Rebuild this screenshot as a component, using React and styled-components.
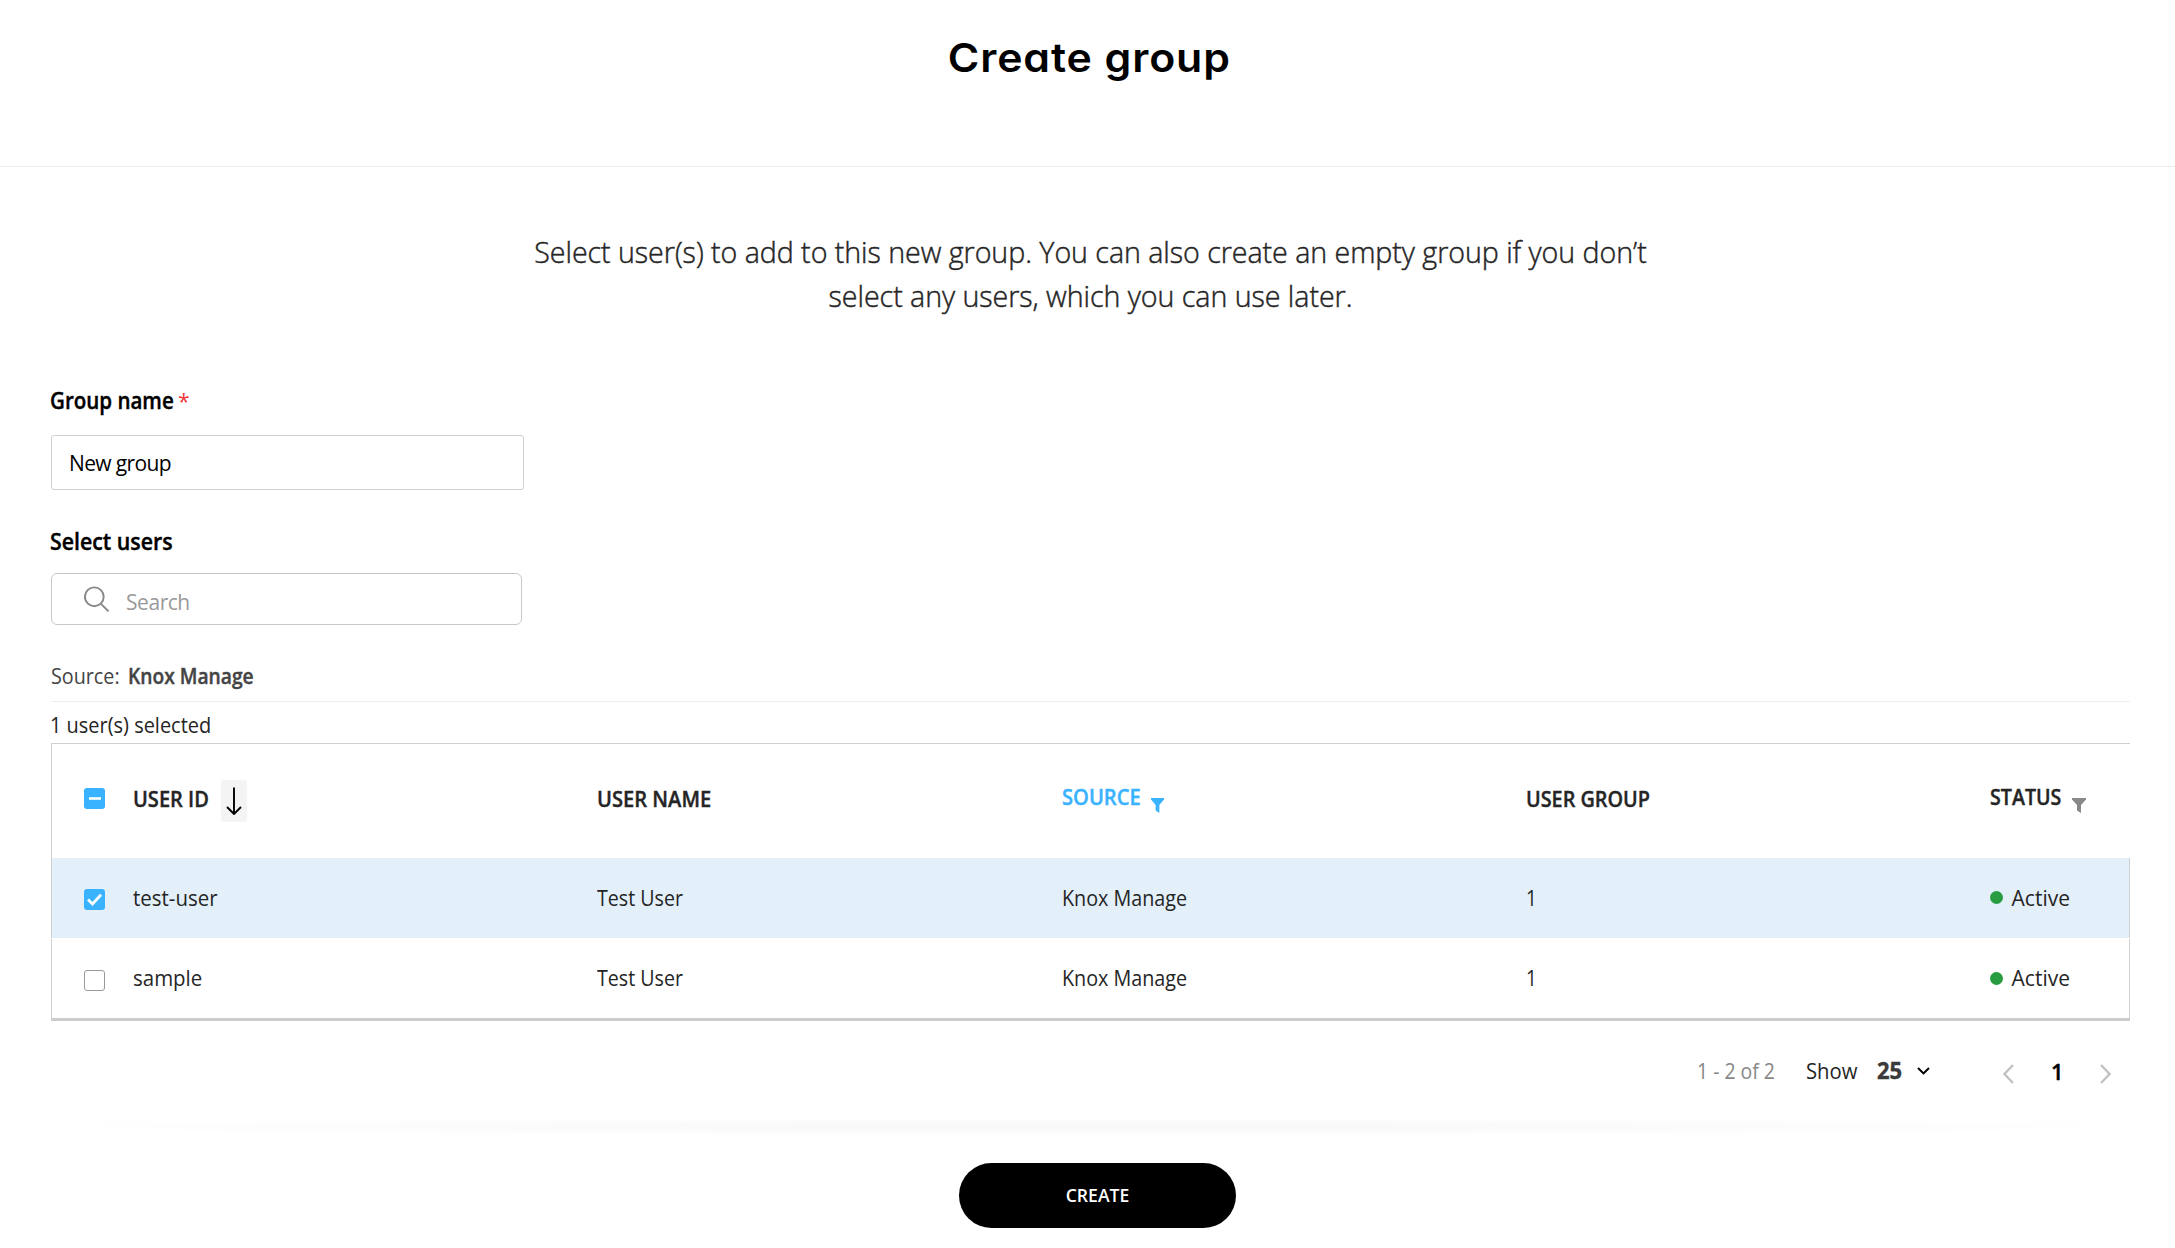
import React from "react";
import styled, { createGlobalStyle, css } from "styled-components";

const GlobalStyle = createGlobalStyle`
  *, *::before, *::after { box-sizing: border-box; }
  body { margin: 0; background: #fff; color: #252525; font-family: "Open Sans", "Noto Sans", sans-serif; }
`;

const type = css`
  font-family: "Open Sans", "Noto Sans", sans-serif;
  font-size: ${(p) => p.$size || 21}px;
  font-weight: ${(p) => p.$weight || 400};
  line-height: 30px;
  white-space: nowrap;
`;

const Page = styled.div`
  min-height: 1248px;
`;
const Header = styled.header`
  height: 167px;
  padding: 28px 47px 0 51px;
  border-bottom: 1px solid #ebebeb;
  display: flex;
  justify-content: center;
  align-items: flex-start;
`;
const Title = styled.h1`
  margin: 0;
  color: #000;
  font: 600 40px/60px Inter, sans-serif;
  font-feature-settings: "cv11";
  letter-spacing: 0.85px;
  transform: scaleX(1.07);
`;
const Main = styled.main`
  padding: 63px 45px 0 51px;
  display: flex;
  flex-direction: column;
  align-items: flex-start;
`;
const Intro = styled.p`
  ${type}
  align-self: center;
  margin: 0;
  line-height: 44px;
  text-align: center;
  letter-spacing: -0.04px;
  -webkit-text-stroke: 0.45px currentColor;
`;
const Label = styled.label`
  display: flex;
  gap: 3px;
  height: 30px;
  margin-top: ${(p) => p.$top}px;
  margin-left: -1px;
  color: #000;
`;
/* $fit condenses the glyphs, $w is the width the text takes up in its row */
const Text = styled.span`
  ${type}
  display: block;
  width: ${(p) => (p.$w ? `${p.$w}px` : "auto")};
  color: ${(p) => p.$color || "inherit"};
  -webkit-text-stroke: ${(p) => (p.$weight ? "0.4px currentColor" : "0")};
  transform: ${(p) => (p.$fit ? `scaleX(${p.$fit})` : "none")};
  transform-origin: 0 50%;
`;
const GroupInput = styled.input`
  ${type}
  width: 473px;
  height: 55px;
  margin-top: 19px;
  padding: 0 17px;
  border: 1px solid #d0d0d0;
  border-radius: 3px;
  color: #000;
  background: #fff;
  letter-spacing: -0.65px;
`;
const SearchBox = styled.div`
  width: 471px;
  height: 52px;
  margin-top: 16px;
  padding-left: 32px;
  border: 1px solid #c8c8c8;
  border-radius: 6px;
  display: flex;
  align-items: center;
`;
const SearchInput = styled.input`
  ${type}
  flex: 1;
  min-width: 0;
  margin: 5px 16px 0 17px;
  padding: 0;
  border: 0;
  background: transparent;
  letter-spacing: -0.45px;
  &::placeholder { color: #999; opacity: 1; }
`;
const SourceLine = styled.div`
  align-self: stretch;
  display: flex;
  gap: 9px;
  margin-top: 36px;
  padding-bottom: 10px;
  border-bottom: 1px solid #eee;
  color: #444;
`;
const Selected = styled.div`
  margin: 8px 0 0 -1px;
`;
const Table = styled.div`
  align-self: stretch;
  margin-top: 3px;
  border-bottom: 3px solid #ccc;
  display: grid;
  row-gap: 1px;
`;
const rowGrid = css`
  display: grid;
  grid-template-columns: 48.8px 464.4px 464.4px 464.4px 463.6px 1fr;
  align-items: center;
  padding-left: 32px;
  border-left: 1px solid #d0d0d0;
`;
const HeadRow = styled.div`
  ${rowGrid}
  height: 115px;
  margin-bottom: -1px;
  padding-bottom: 5px;
  border-top: 1px solid #d0d0d0;
`;
const Row = styled.div`
  ${rowGrid}
  height: ${(p) => (p.$selected ? 80 : 79)}px;
  padding-bottom: 1px;
  border-right: 1px solid #d0d0d0;
  background: ${(p) => (p.$selected ? "#e3f0f9" : "#fff")};
`;
const Cell = styled.div`
  display: flex;
  align-items: center;
  gap: ${(p) => p.$gap || 0}px;
  margin-top: ${(p) => p.$shift || 0}px;
`;
const Check = styled.span`
  width: 21px;
  height: 21px;
  margin-top: ${(p) => p.$drop || 0}px;
  border-radius: 3px;
  display: flex;
  background: ${(p) => (p.$on ? "#39b2ff" : "#fff")};
  border: ${(p) => (p.$on ? "0" : "1px solid #999")};
`;
const SortButton = styled.span`
  width: 26px;
  height: 42px;
  margin-top: 6px;
  border-radius: 3px;
  background: #f4f4f4;
  display: flex;
  align-items: center;
  justify-content: center;
`;
const FunnelSlot = styled.span`
  display: flex;
  margin-top: 18px;
`;
const Dot = styled.span`
  width: 13px;
  height: 13px;
  border-radius: 50%;
  background: #289c41;
`;
const Pager = styled.div`
  align-self: flex-end;
  display: flex;
  align-items: center;
  height: 30px;
  margin: 35px 19px 0 0;
`;
const PagerItem = styled.span`
  display: flex;
  justify-content: flex-start;
  width: ${(p) => p.$w}px;
  padding-top: ${(p) => p.$drop || 0}px;
`;
const Glow = styled.div`
  align-self: stretch;
  height: 14px;
  margin-top: 34px;
  background: radial-gradient(ellipse 52% 70% at 50% 45%, #f8f8f8 0%, #fafafa 45%, #fff 100%);
`;
const CreateButton = styled.button`
  ${type}
  width: 277px;
  height: 65px;
  margin: 29px 0 0 908px;
  padding: 0 0 1px;
  border: 0;
  border-radius: 33px;
  background: #000;
  color: #fff;
`;

const Funnel = ({ color, w }) => (
  <svg width={w} height="15" viewBox="0 0 14 15" preserveAspectRatio="none" fill={color}>
    <path d="M0 0H14V1.5L9 7V15L5 12.5V7L0 1.5Z" />
  </svg>
);

const Chevron = ({ d }) => (
  <svg width="11" height="20" viewBox="0 0 11 20" fill="none" stroke="#c2c2c2" strokeWidth="2.4">
    <path d={d} />
  </svg>
);

const users = [
  { id: "test-user", name: "Test User", source: "Knox Manage", group: "1", status: "Active", selected: true },
  { id: "sample", name: "Test User", source: "Knox Manage", group: "1", status: "Active", selected: false },
];
const head = { $size: 22, $weight: 600 };
const label = { $size: 22.8, $weight: 600 };

export default function App() {
  return (
    <Page>
      <GlobalStyle />
      <Header><Title>Create group</Title></Header>
      <Main>
        <Intro $size={28.6} $weight={300}>
          Select user(s) to add to this new group. You can also create an empty group if you don’t
          <br />
          select any users, which you can use later.
        </Intro>
        <Label $top={68}>
          <Text {...label} $w={125} $fit={0.9}>Group name</Text>
          <Text $size={21} $color="#f5353c">*</Text>
        </Label>
        <GroupInput defaultValue="New group" />
        <Label $top={37}>
          <Text {...label} $fit={0.935}>Select users</Text>
        </Label>
        <SearchBox>
          <svg width="25" height="26" viewBox="0 0 25 26" fill="none" stroke="#888" strokeWidth="1.9">
            <circle cx="10.3" cy="10.8" r="9.4" />
            <path d="M17 17.8L24.5 25.3" />
          </svg>
          <SearchInput placeholder="Search" />
        </SearchBox>
        <SourceLine>
          <Text $w={68} $fit={0.94}>Source:</Text>
          <Text $weight={600} $fit={0.915}>Knox Manage</Text>
        </SourceLine>
        <Selected><Text $fit={0.95}>1 user(s) selected</Text></Selected>
        <Table>
          <HeadRow>
            <Cell>
              <Check $on>
                <svg width="21" height="21" viewBox="0 0 21 21"><path d="M5 10.5H17" stroke="#fff" strokeWidth="2.6" /></svg>
              </Check>
            </Cell>
            <Cell $gap={13} $shift={-1}>
              <Text {...head} $w={75.2} $fit={0.91}>USER ID</Text>
              <SortButton>
                <svg width="16" height="28" viewBox="0 0 16 28" fill="none" stroke="#000" strokeWidth="1.9"><path d="M8 0.5V27M1 20L8 27L15 20" /></svg>
              </SortButton>
            </Cell>
            <Cell $shift={-1}><Text {...head} $fit={0.915}>USER NAME</Text></Cell>
            <Cell $gap={11} $shift={-5}>
              <Text {...head} $w={78.2} $fit={0.915} $color="#39b2ff">SOURCE</Text>
              <FunnelSlot><Funnel color="#39b2ff" w={13} /></FunnelSlot>
            </Cell>
            <Cell $shift={-1}><Text {...head} $fit={0.9}>USER GROUP</Text></Cell>
            <Cell $gap={11} $shift={-5}>
              <Text {...head} $w={71} $fit={0.893}>STATUS</Text>
              <FunnelSlot><Funnel color="#888" w={14} /></FunnelSlot>
            </Cell>
          </HeadRow>
          {users.map((u) => (
            <Row key={u.id} $selected={u.selected}>
              <Cell>
                <Check $on={u.selected} $drop={4}>
                  {u.selected && (
                    <svg width="21" height="21" viewBox="0 0 21 21" fill="none"><path d="M4 10.5L8.5 15L17 5.8" stroke="#fff" strokeWidth="2.8" /></svg>
                  )}
                </Check>
              </Cell>
              <Cell><Text $fit={0.975}>{u.id}</Text></Cell>
              <Cell><Text $fit={0.935}>{u.name}</Text></Cell>
              <Cell><Text $fit={0.94}>{u.source}</Text></Cell>
              <Cell><Text $fit={0.9}>{u.group}</Text></Cell>
              <Cell $gap={9}><Dot /><Text>{u.status}</Text></Cell>
            </Row>
          ))}
        </Table>
        <Pager>
          <PagerItem $w={109}><Text $color="#888" $fit={0.925}>1 - 2 of 2</Text></PagerItem>
          <PagerItem $w={71}><Text $fit={0.965}>Show</Text></PagerItem>
          <PagerItem $w={40}><Text $size={22.4} $weight={700} $fit={0.98} $color="#3a3a3a">25</Text></PagerItem>
          <PagerItem $w={86}>
            <svg width="13" height="8" viewBox="0 0 13 8" fill="none" stroke="#000" strokeWidth="2"><path d="M1 1L6.5 6.4L12 1" /></svg>
          </PagerItem>
          <PagerItem $w={48} $drop={5}><Chevron d="M10 1L1.5 10L10 19" /></PagerItem>
          <PagerItem $w={49}><Text $size={22} $weight={600} $color="#000">1</Text></PagerItem>
          <PagerItem $w={11} $drop={5}><Chevron d="M1 1L9.5 10L1 19" /></PagerItem>
        </Pager>
        <Glow />
        <CreateButton $size={17.6} $weight={600}>CREATE</CreateButton>
      </Main>
    </Page>
  );
}
